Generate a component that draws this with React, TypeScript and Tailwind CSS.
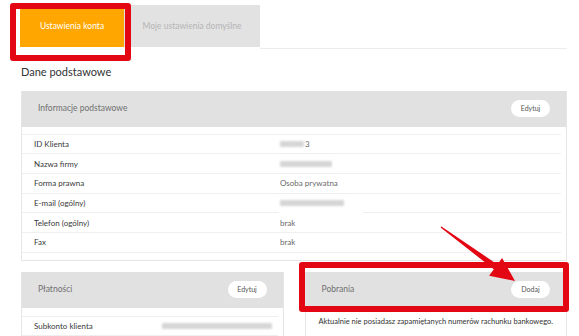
import React from "react";

type Row = { label: string; value?: string; blur?: number; tail?: string };

const ROWS: Row[] = [
  { label: "ID Klienta", blur: 24, tail: "3" },
  { label: "Nazwa firmy", blur: 52 },
  { label: "Forma prawna", value: "Osoba prywatna" },
  { label: "E-mail (ogólny)", blur: 64 },
  { label: "Telefon (ogólny)", value: "brak" },
  { label: "Fax", value: "brak" },
];

function Blur({ w }: { w: number }) {
  return (
    <span
      className="inline-block h-[6px] rounded-[1px] bg-[#d6d6d6] blur-[1px]"
      style={{ width: w }}
    />
  );
}

function Pill({ label }: { label: string }) {
  return (
    <span className="flex h-[17px] w-[39px] items-center justify-center rounded-full bg-white text-[7px] text-[#555]">
      {label}
    </span>
  );
}

function CardHeader({ title, action }: { title: string; action: string }) {
  return (
    <div className="flex h-[36px] items-center justify-between bg-[#e1e1e1] pl-[16px] pr-[16px]">
      <span className="text-[8.5px] text-[#707070]">{title}</span>
      <Pill label={action} />
    </div>
  );
}

function InfoRow({ row }: { row: Row }) {
  return (
    <div className="flex h-[19.7px] items-center border-b border-[#efefef] pl-[12px] text-[8px]">
      <span className="w-[246px] text-[#3a3a3a]">{row.label}</span>
      <span className="flex items-center text-[#6a6a6a]">
        {row.blur ? <Blur w={row.blur} /> : null}
        {row.tail ? <span className="ml-[1px]">{row.tail}</span> : null}
        {row.value}
      </span>
    </div>
  );
}

export default function App() {
  return (
    <div
      className="relative h-[336px] w-[579px] overflow-hidden bg-white"
      style={{ fontFamily: "Lato, 'Open Sans', sans-serif" }}
    >
      {/* zakładki */}
      <div className="flex pl-[20px] pr-[12px] pt-[5px]">
        <div className="flex h-[42px] w-[104px] items-center justify-center bg-[#ffa700] text-[8.5px] text-white">
          Ustawienia konta
        </div>
        <div className="flex h-[42px] w-[136px] items-center justify-center bg-[#e2e2e2] text-[8.5px] text-[#b5b5b5]">
          Moje ustawienia domyślne
        </div>
        <div className="h-[44px] flex-1 border-b border-[#ececec]" />
      </div>

      <div className="pl-[21px] pt-[15px] text-[11px] text-[#333]">Dane podstawowe</div>

      {/* Informacje podstawowe */}
      <div className="ml-[21px] mr-[12px] mt-[10px] border border-t-0 border-[#e6e6e6] pb-[7px]">
        <CardHeader title="Informacje podstawowe" action="Edytuj" />
        <div className="relative mr-[5px] mt-[7px] border-t border-[#efefef]">
          {ROWS.map((r) => (
            <InfoRow key={r.label} row={r} />
          ))}
          <div className="absolute left-[257px] top-[75px] h-[4px] w-[84px] bg-white" />
        </div>
      </div>

      {/* dolne karty */}
      <div className="ml-[21px] mr-[12px] mt-[11px] grid grid-cols-2 gap-[21px]">
        <div className="border border-t-0 border-[#e6e6e6]">
          <CardHeader title="Płatności" action="Edytuj" />
          <div className="mr-[5px] mt-[8px] border-t border-[#efefef]">
            <div className="flex h-[19.7px] items-center border-b border-[#efefef] pl-[12px] text-[8px]">
              <span className="w-[128px] text-[#3a3a3a]">Subkonto klienta</span>
              <Blur w={110} />
            </div>
          </div>
        </div>
        <div className="border border-t-0 border-[#e6e6e6]">
          <CardHeader title="Pobrania" action="Dodaj" />
          <div className="pt-[8px] text-center text-[7.5px] text-[#333]">
            Aktualnie nie posiadasz zapamiętanych numerów rachunku bankowego.
          </div>
        </div>
      </div>

      {/* ramki wyróżnienia */}
      <div className="absolute left-[10px] top-[3px] h-[58px] w-[121px] rounded-[3px] border-[6px] border-[#e30613]" />
      <div className="absolute left-[299px] top-[262px] h-[50px] w-[270px] rounded-[3px] border-[6px] border-[#e30613]" />

      <svg className="absolute left-0 top-0" width="579" height="336">
        <polygon
          points="441.4,226.5 497.4,264.4 502.1,257.9 515,281 489.1,275.7 493.8,269.2 440.6,227.5"
          fill="#e30613"
        />
      </svg>
    </div>
  );
}
